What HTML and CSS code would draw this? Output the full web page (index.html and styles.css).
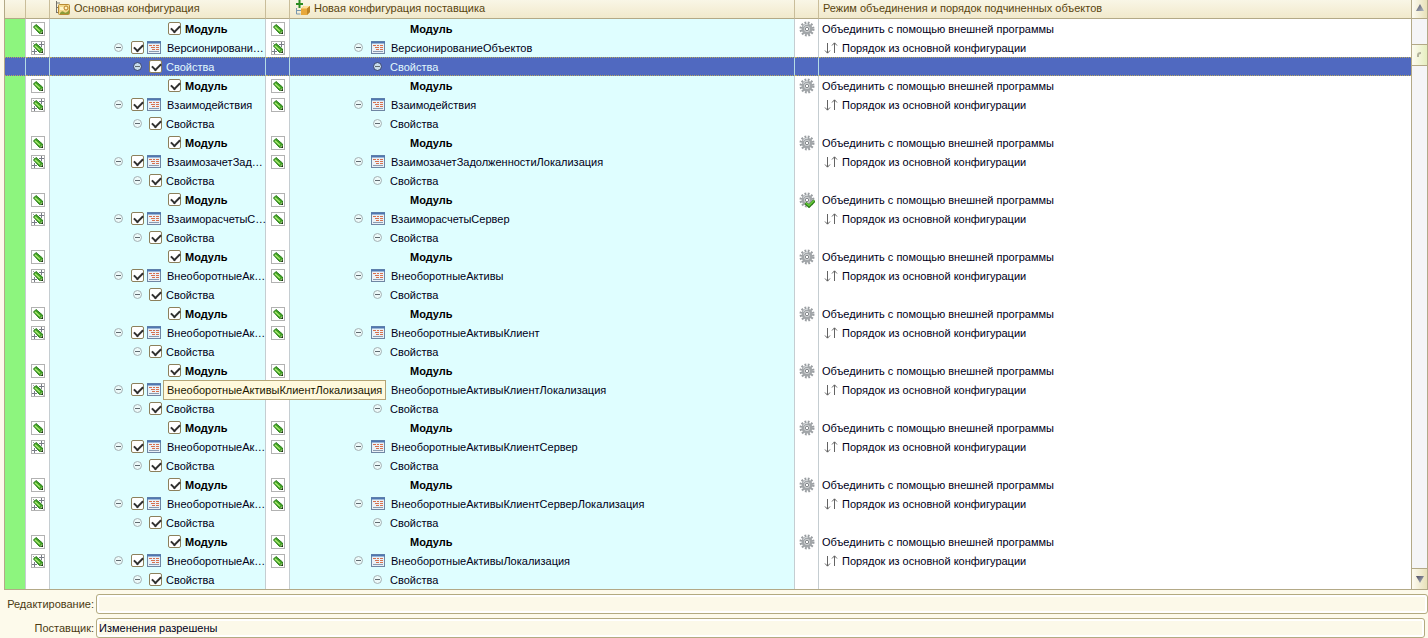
FILE: index.html
```
<!DOCTYPE html>
<html lang="ru">
<head>
<meta charset="utf-8">
<title>Сравнение, объединение</title>
<link rel="stylesheet" href="styles.css">
</head>
<body>
<svg class="defs" aria-hidden="true">
  <defs>
    <linearGradient id="gArrow" x1="0" y1="0" x2="1" y2="1"><stop offset="0" stop-color="#4c4b62"/><stop offset="1" stop-color="#b4bcc6"/></linearGradient>
    <symbol id="frame" viewBox="0 0 14 14">
      <rect x=".5" y=".5" width="13" height="13" fill="#fff" stroke="#b2b2b2"/>
    </symbol>
    <symbol id="pen" viewBox="0 0 14 14">
      <path d="M2.500 5 5 2.500 11.500 8V11.500H8.500z" fill="#3fa022" stroke="#2b7d1c"/>
      <path d="M4 4.800 9 9.300" stroke="#a6ea6c" stroke-width="1.500"/>
      <path d="M9 11.200 11.200 9V11.200z" fill="#d9e6b4"/>
      <path d="M10.500 10.500H12V12h-1.500z" fill="#1c2c14"/>
    </symbol>
    <symbol id="pencil" viewBox="0 0 14 14">
      <use href="#frame"/><use href="#pen"/>
    </symbol>
    <symbol id="pencil-star" viewBox="0 0 14 14">
      <use href="#frame"/>
      <path d="M2 2l2 2M10 10l2.500 2.500" stroke="#9aa09c"/>
      <use href="#pen"/>
      <path d="M10.500 1v5M8 3.500h5M3.500 8v5M1 10.500h5" stroke="#787c86" fill="none"/>
    </symbol>
    <symbol id="module" viewBox="0 0 14 13">
      <rect x=".5" y=".5" width="13" height="12" fill="#eaf1f7" stroke="#6f86a3"/>
      <path d="M0 1.500h14" stroke="#4f78b2" stroke-width="2"/>
      <path d="M2 4.500h3M6 4.500h2M9 4.500h3M4 6.500h4M9 6.500h3M5 8.500h3M9 8.500h3" stroke="#d6714f"/>
      <path d="M2 10.500h10" stroke="#8a9bb0"/>
    </symbol>
    <symbol id="gear" viewBox="0 0 16 16">
      <circle cx="8" cy="8" r="6.300" fill="none" stroke="#9a9ea2" stroke-width="2.400" stroke-dasharray="1.800 1.500"/>
      <circle cx="8" cy="8" r="4.200" fill="#d5d7d8" stroke="#a2a6a9" stroke-width="2.600"/>
      <circle cx="8" cy="8" r="1.700" fill="#fff" stroke="#84888c"/>
      <path d="M4 5.500q2-2.500 5-2.500" stroke="#dfe2e4" fill="none"/>
    </symbol>
    <symbol id="gear-ok" viewBox="0 0 16 16">
      <use href="#gear"/>
      <path d="M6.500 11 10 14.200 15.500 8.500" fill="none" stroke="#2a7c16" stroke-width="3"/>
      <path d="M7 11 10 13.500 15 8.500" fill="none" stroke="#67cb38" stroke-width="1.500"/>
    </symbol>
    <symbol id="order" viewBox="0 0 14 12">
      <path d="M3.500 1v10M1 8.500l2.500 2.700L6 8.500M10.500 11V1M8 3.500 10.500.8 13 3.500" fill="none" stroke="#636363"/>
    </symbol>
  </defs>
</svg>

<main class="compare">
  <div class="grid">
    <table class="tree">
      <colgroup><col class="c-mark"><col class="c-icon"><col class="c-main"><col class="c-icon"><col class="c-new"><col class="c-icon"><col></colgroup>
      <thead>
        <tr>
          <th></th><th></th>
          <th><span class="head"><svg width="16" height="16" viewBox="0 0 16 16"><path d="M1.500 1v12M1 3.500h3M1 7.500h3M1 12.500h3" stroke="#77736a" fill="none"/><rect x="3.500" y="4.500" width="11" height="10" rx="1" fill="#f3d98c" stroke="#b98b32"/><path d="M2 2h3v2H2z" fill="#b7b7a8"/><path d="M5 7h4v3H5z" fill="#fff4c7"/><circle cx="11" cy="8" r="2" fill="#fff2bc" stroke="#b77d25"/><path d="M5 13q2-3 4-1t5-2v4H5z" fill="#8c9c38"/></svg>Основная конфигурация</span></th>
          <th></th>
          <th><span class="head"><svg width="16" height="16" viewBox="0 0 16 16"><path d="M4.500 0v8M1 4h7" stroke="#2c8b20" stroke-width="2"/><path d="M1.500 8v6h4M2 10.500h4" stroke="#7897ae" fill="none"/><path d="M6 8.500 9 6h6v6l-3 3H6z" fill="#e7a83c"/><path d="M6 8.500 9 6h6l-3 2.500z" fill="#ffe09a"/><path d="M12 8.500 15 6v6l-3 3z" fill="#bc8426"/></svg>Новая конфигурация поставщика</span></th>
          <th></th>
          <th class="mode-head">Режим объединения и порядок подчиненных объектов</th>
        </tr>
      </thead>
      <tbody id="rows"></tbody>
    </table>
    <div class="scroll">
      <button class="arrow up" aria-label="Вверх"><svg width="8" height="7" viewBox="0 0 8 7"><path d="M4 0 8 7H0z" fill="url(#gArrow)"/></svg></button>
      <div class="thumb"><svg width="6" height="6" viewBox="0 0 6 6"><path d="M1 5V3q0-2 3-2" fill="none" stroke="#b3b39c" stroke-width="2"/></svg></div>
      <button class="arrow down" aria-label="Вниз"><svg width="8" height="7" viewBox="0 0 8 7"><path d="M0 0h8L4 7z" fill="url(#gArrow)"/></svg></button>
    </div>
  </div>
  <div class="fields">
    <label for="edit">Редактирование:</label><input id="edit" type="text" readonly>
    <label for="vendor">Поставщик:</label><input id="vendor" class="short" type="text" value="Изменения разрешены" readonly>
  </div>
</main>
<script src="rows.js"></script>
</body>
</html>
```
FILE: styles.css
```
* { box-sizing: border-box; }
body {
  margin: 0;
  background: #fdfaeb;
  color: #000018;
  font-family: "Liberation Sans", Arial, sans-serif;
  font-size: 11px;
  line-height: 18px;
}
.defs { position: absolute; width: 0; height: 0; }
svg { display: block; flex: none; }
.grid {
  display: flex;
  margin-left: 4px;
  border: solid #b3a987;
  border-width: 0 1px 1px;
}
.tree {
  flex: 1;
  width: 100%;
  min-width: 0;
  table-layout: fixed;
  border-collapse: separate;
  border-spacing: 0;
  background: #fff;
}
.c-mark { width: 21px; }
.c-icon { width: 24px; }
.c-main { width: 216px; }
.c-new { width: 505px; }
th, td {
  height: 19px;
  padding: 0;
  border-right: 1px solid #c5cdd1;
  text-align: left;
  white-space: nowrap;
}
th:last-child, td:last-child { border-right: 0; }
th {
  padding-bottom: 2px;
  border-right-color: #c9bd9a;
  border-bottom: 1px solid #b3a987;
  background: linear-gradient(#f9f6e6, #f1e9cb);
  color: #59450f;
  font-weight: normal;
  line-height: 16px;
}
.head { display: flex; align-items: center; gap: 3px; padding-left: 5px; height: 16px; }
.mode-head { padding-left: 4px; }
.mark { background: #8df57e; }
.cyan { background: #dffeff; }
.badge > svg { margin: 0 auto; }
.line { position: relative; display: flex; align-items: center; height: 19px; }
.line.object { padding-left: 64px; }
.line.props { padding-left: 83px; }
.main .module { padding-left: 118px; }
.new .module { padding-left: 120px; }
.module { font-weight: bold; color: #000; }
.toggle {
  position: relative;
  flex: none;
  width: 9px;
  height: 9px;
  margin-right: 8px;
  padding: 0;
  border: 1px solid #a4b2b4;
  border-radius: 50%;
  background: #edfafa;
}
.toggle::after {
  content: "";
  position: absolute;
  top: 3px;
  left: 1px;
  width: 5px;
  height: 1px;
  background: #606a70;
}
.check {
  appearance: none;
  flex: none;
  width: 13px;
  height: 13px;
  margin: 0 4px 0 0;
  border: 1px solid #8c805c;
  border-radius: 2px;
  background: #fff;
}
.check:checked::after {
  content: "";
  display: block;
  width: 7px;
  height: 4px;
  margin: 3px 2px;
  border: solid #303030;
  border-width: 0 0 2px 2px;
  transform: translateY(-1px) rotate(-45deg);
}
.object .check { margin-right: 3px; }
.object svg { margin-right: 6px; }
.main .props .toggle { margin-right: 7px; }
.mode { padding-left: 3px; }
.order { display: flex; align-items: center; gap: 4px; padding-left: 2px; }
.selected td {
  background: #5069c0;
  color: #e0f8fc;
  border-top: 1px dotted #b8a860;
  border-bottom: 1px dotted #b8a860;
  border-right-color: #b5dce5;
}
.selected .line { height: 17px; }
.selected .toggle { background: #c8dcec; border-color: #34406a; }
.tip {
  position: absolute;
  left: 113px;
  top: 0;
  z-index: 1;
  height: 20px;
  padding: 0 3px;
  border: 1px solid #b3a477;
  background: #fff9dc;
  color: #1c1800;
}
.scroll {
  display: flex;
  flex: none;
  flex-direction: column;
  width: 16px;
  border-left: 1px solid #b3a987;
  background: #f5f5f7;
}
.arrow {
  display: flex;
  align-items: center;
  justify-content: center;
  height: 19px;
  padding: 0;
  border: solid #b3a987;
  border-width: 0 0 1px;
  background: linear-gradient(90deg, #fdfbf1, #e8e1b9);
}
.up { padding-bottom: 4px; }
.down { height: 21px; margin-top: auto; border-width: 1px 0 0; }
.thumb {
  display: flex;
  align-items: center;
  justify-content: center;
  height: 22px;
  margin-top: 25px;
  border: solid #b3a987;
  border-width: 1px 0;
  background: linear-gradient(90deg, #fdfbf1, #e6efc0);
}
.fields {
  display: grid;
  grid-template-columns: 94px 1fr;
  gap: 4px 2px;
  padding-top: 4px;
  color: #4b3a12;
}
.fields label { text-align: right; line-height: 20px; }
.fields input {
  width: 100%;
  height: 20px;
  padding: 0 2px;
  border: 1px solid #b3aa80;
  border-radius: 3px;
  background: #fcf9e9;
  box-shadow: inset 0 0 0 2px #fff;
  color: #000018;
  font: inherit;
}
.fields .short { width: calc(100% - 3px); }
```
FILE: rows.js
```
const objects = [
  ["Версионировани…", "ВерсионированиеОбъектов"],
  ["Взаимодействия", "Взаимодействия"],
  ["ВзаимозачетЗад…", "ВзаимозачетЗадолженностиЛокализация"],
  ["ВзаиморасчетыС…", "ВзаиморасчетыСервер"],
  ["ВнеоборотныеАк…", "ВнеоборотныеАктивы"],
  ["ВнеоборотныеАк…", "ВнеоборотныеАктивыКлиент"],
  ["ВнеоборотныеАк…", "ВнеоборотныеАктивыКлиентЛокализация"],
  ["ВнеоборотныеАк…", "ВнеоборотныеАктивыКлиентСервер"],
  ["ВнеоборотныеАк…", "ВнеоборотныеАктивыКлиентСерверЛокализация"],
  ["ВнеоборотныеАк…", "ВнеоборотныеАктивыЛокализация"]
];
const icon = (id, w, h) => `<svg width="${w}" height="${h}"><use href="#${id}"/></svg>`;
const toggle = '<button class="toggle" aria-label="Свернуть"></button>';
const check = label => `<input class="check" type="checkbox" aria-label="${label}" checked>`;
const row = (kind, left, main, right, next, gear, mode, cls = "") => `
  <tr class="${cls}"><td class="mark"></td><td class="badge">${left}</td>
  <td class="cyan main"><div class="line ${kind}">${main}</div></td><td class="badge">${right}</td>
  <td class="cyan new"><div class="line ${kind}">${next}</div></td>
  <td class="badge">${gear}</td><td class="mode">${mode}</td></tr>`;
const pencil = icon("pencil", 14, 14);
const star = icon("pencil-star", 14, 14);
const moduleIcon = icon("module", 14, 13);

document.getElementById("rows").innerHTML = objects.map(([short, full], i) =>
  row("module", pencil, check("Модуль") + "Модуль", pencil, "Модуль",
    icon(i === 3 ? "gear-ok" : "gear", 16, 16), "Объединить с помощью внешней программы") +
  row("object", star,
    toggle + check(full) + moduleIcon + (i === 6 ? `<span class="tip">${full}</span>` : short),
    i === 0 ? star : pencil, toggle + moduleIcon + full, "",
    `<div class="order">${icon("order", 14, 12)}Порядок из основной конфигурации</div>`) +
  row("props", "", toggle + check("Свойства") + "Свойства", "", toggle + "Свойства", "", "",
    i === 0 ? "selected" : "")
).join("");
```
